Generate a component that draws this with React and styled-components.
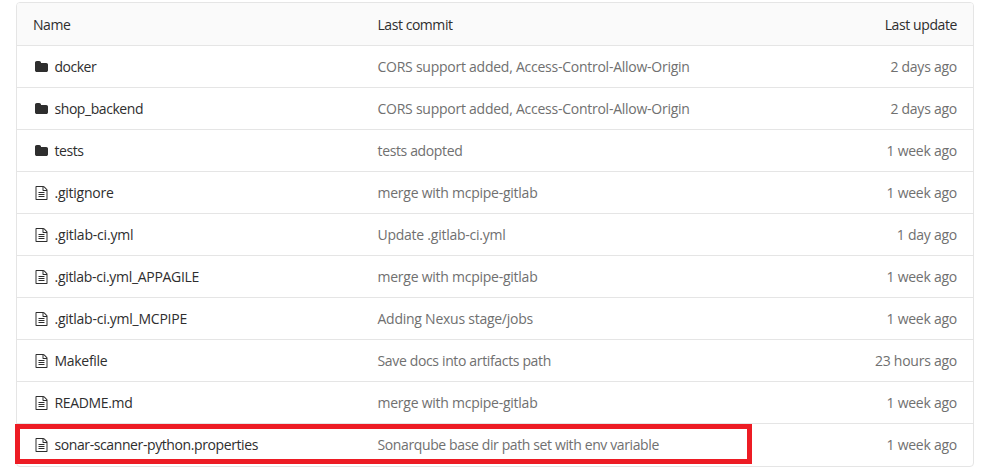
import React from "react";
import styled, { createGlobalStyle } from "styled-components";

const GlobalStyle = createGlobalStyle`
  * { box-sizing: border-box; }
  body { margin: 0; background: #fff; }
`;

const Page = styled.main`
  height: 475px;
  padding: 2px 16px 0;
  overflow: hidden;
  font: 14px/20px "Open Sans", sans-serif;
  color: #2e2e2e;
`;

const FileTable = styled.div`
  position: relative;
  width: 958px;
  height: 465px;
  border: 1px solid #e5e5e5;
  border-radius: 4px;
`;

const Row = styled.div`
  display: grid;
  grid-template-columns: 344.5px 1fr auto;
  align-items: center;
  height: 42px;
  padding: 1px 16px 0;
  border-bottom: 1px solid #e5e5e5;
  &:last-of-type { border-bottom: 0; height: 41px; }
`;

const HeaderRow = styled(Row)`
  height: 43px;
  padding-top: 2px;
  background: #fafafa;
  border-radius: 3px 3px 0 0;
`;

const Text = styled.span`
  white-space: nowrap;
  letter-spacing: ${(p) => p.$track ?? -0.25}px;
`;

const Muted = styled(Text)`
  color: #707070;
`;

const NameCell = styled.div`
  display: flex;
  align-items: center;
`;

const IconSlot = styled.span`
  display: flex;
  align-items: flex-start;
  width: 19.5px;
  height: 14px;
  margin-left: 2px;
  padding-top: ${(p) => (p.$folder ? 1 : 0)}px;
`;

const Highlight = styled.aside`
  position: absolute;
  left: -2px;
  top: 421px;
  width: 737px;
  height: 40px;
  border: 5px solid #ed1c24;
`;

const FolderIcon = () => (
  <svg width="13" height="11" viewBox="0 128 1664 1408" fill="#2e2e2e">
    <path d="M1664 608v704q0 92-66 158t-158 66h-1216q-92 0-158-66t-66-158v-960q0-92 66-158t158-66h320q92 0 158 66t66 158v32h672q92 0 158 66t66 158z" />
  </svg>
);

const FileIcon = () => (
  <svg width="13" height="14" viewBox="-64 0 1664 1792" fill="#2e2e2e">
    <path d="M1468 380q28 28 48 76t20 88v1152q0 40-28 68t-68 28h-1344q-40 0-68-28t-28-68v-1600q0-40 28-68t68-28h896q40 0 88 20t76 48zm-444-244v376h376q-10-29-22-41l-313-313q-12-12-41-22zm384 1528v-1024h-416q-40 0-68-28t-28-68v-416h-768v1536h1280zm-1024-864q0-14 9-23t23-9h704q14 0 23 9t9 23v64q0 14-9 23t-23 9h-704q-14 0-23-9t-9-23v-64zm736 224q14 0 23 9t9 23v64q0 14-9 23t-23 9h-704q-14 0-23-9t-9-23v-64q0-14 9-23t23-9h704zm0 256q14 0 23 9t9 23v64q0 14-9 23t-23 9h-704q-14 0-23-9t-9-23v-64q0-14 9-23t23-9h704z" />
  </svg>
);

const files = [
  { folder: true, name: "docker", nameTrack: -0.5, commit: "CORS support added, Access-Control-Allow-Origin", date: "2 days ago" },
  { folder: true, name: "shop_backend", nameTrack: -0.44, commit: "CORS support added, Access-Control-Allow-Origin", date: "2 days ago" },
  { folder: true, name: "tests", nameTrack: -0.45, commit: "tests adopted", commitTrack: -0.36, date: "1 week ago" },
  { name: ".gitignore", commit: "merge with mcpipe-gitlab", date: "1 week ago" },
  { name: ".gitlab-ci.yml", nameTrack: -0.2, commit: "Update .gitlab-ci.yml", date: "1 day ago" },
  { name: ".gitlab-ci.yml_APPAGILE", nameTrack: -0.3, commit: "merge with mcpipe-gitlab", date: "1 week ago" },
  { name: ".gitlab-ci.yml_MCPIPE", commit: "Adding Nexus stage/jobs", date: "1 week ago" },
  { name: "Makefile", nameTrack: -0.3, commit: "Save docs into artifacts path", commitTrack: -0.35, date: "23 hours ago" },
  { name: "README.md", nameTrack: -0.35, commit: "merge with mcpipe-gitlab", date: "1 week ago" },
  { name: "sonar-scanner-python.properties", nameTrack: -0.4, commit: "Sonarqube base dir path set with env variable", commitTrack: -0.38, date: "1 week ago" },
];

export default function App() {
  return (
    <>
      <GlobalStyle />
      <Page>
        <FileTable>
          <HeaderRow>
            <Text $track={-0.45}>Name</Text>
            <Text $track={-0.45}>Last commit</Text>
            <Text $track={-0.4}>Last update</Text>
          </HeaderRow>
          {files.map((f) => (
            <Row key={f.name}>
              <NameCell>
                <IconSlot $folder={f.folder}>{f.folder ? <FolderIcon /> : <FileIcon />}</IconSlot>
                <Text $track={f.nameTrack}>{f.name}</Text>
              </NameCell>
              <Muted $track={f.commitTrack}>{f.commit}</Muted>
              <Muted>{f.date}</Muted>
            </Row>
          ))}
          <Highlight />
        </FileTable>
      </Page>
    </>
  );
}
